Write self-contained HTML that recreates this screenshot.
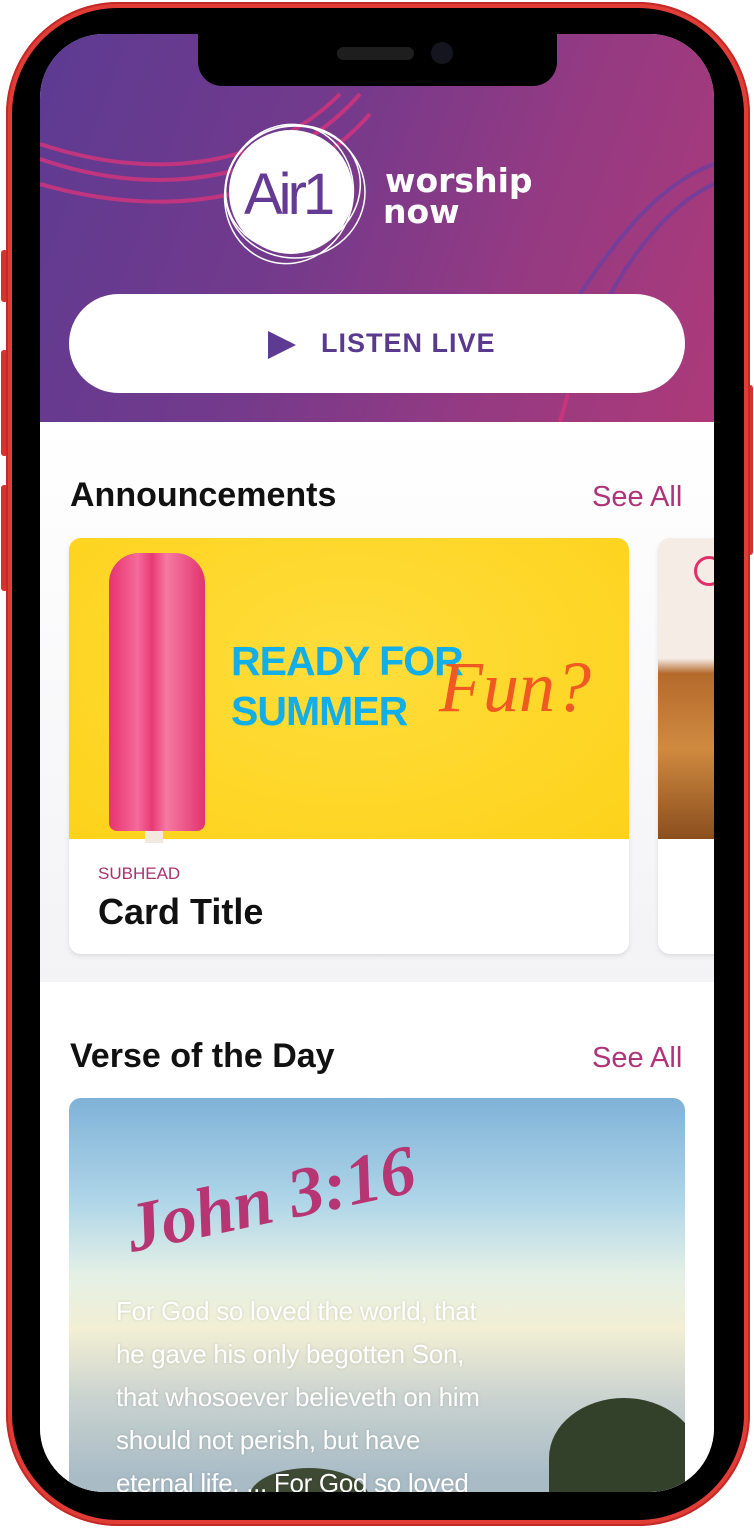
<!DOCTYPE html>
<html><head><meta charset="utf-8"><style>
*{margin:0;padding:0;box-sizing:border-box}
body{width:754px;height:1528px;background:#fff;position:relative;overflow:hidden;font-family:"Liberation Sans",sans-serif}
.abs{position:absolute}
.frame{left:6px;top:2px;width:744px;height:1524px;border-radius:112px;background:#e23c37;box-shadow:inset 0 0 0 2px #c22a26}
.bezel{left:12px;top:8px;width:732px;height:1512px;border-radius:106px;background:#000}
.screen{left:40px;top:34px;width:674px;height:1458px;border-radius:64px;overflow:hidden;background:#fff}
.btn{background:#d8322e}
</style></head><body>
<div class="abs btn" style="left:1px;top:250px;width:7px;height:52px;border-radius:3px"></div>
<div class="abs btn" style="left:1px;top:350px;width:7px;height:106px;border-radius:3px"></div>
<div class="abs btn" style="left:1px;top:485px;width:7px;height:106px;border-radius:3px"></div>
<div class="abs btn" style="left:746px;top:385px;width:7px;height:170px;border-radius:3px"></div>
<div class="abs frame"></div>
<div class="abs bezel"></div>
<div class="abs screen">
  <div class="abs" style="left:0;top:0;width:674px;height:388px;background:linear-gradient(110deg,#5c3b92 0%,#743a8c 40%,#953a82 70%,#ad3a79 100%)"></div>
  <svg class="abs" style="left:0;top:0" width="674" height="388">
    <g fill="none" stroke="#d0357c" stroke-width="4" opacity=".85">
      <path d="M0 110 C120 150 230 130 300 60"/>
      <path d="M0 125 C130 170 250 140 320 60"/>
      <path d="M0 150 C140 190 260 160 330 80"/>
    </g>
    <g fill="none" stroke="#6c3fa0" stroke-width="4" opacity=".8">
      <path d="M674 130 C620 150 580 200 540 260"/>
      <path d="M674 150 C630 170 590 220 560 280"/>
    </g>
    <path d="M520 388 L528 360" stroke="#c8357a" stroke-width="4"/>
    <circle cx="251" cy="158" r="62" fill="#fff"/>
    <g fill="none" stroke="#fff" stroke-width="1.5">
      <ellipse cx="253" cy="154" rx="68" ry="62" transform="rotate(-20 253 154)"/>
      <ellipse cx="249" cy="160" rx="64" ry="70" transform="rotate(15 249 160)"/>
      <ellipse cx="255" cy="158" rx="70" ry="66"/>
    </g>
    <text x="204" y="180" font-family="Liberation Sans" font-size="58" fill="#643a92" letter-spacing="-4">Air1</text>
    <text x="345" y="158" font-family="DejaVu Sans" font-weight="bold" font-size="33" fill="#fff">worship</text>
    <text x="343" y="189" font-family="DejaVu Sans" font-weight="bold" font-size="33" fill="#fff">now</text>
  </svg>
  <div class="abs" style="left:29px;top:260px;width:616px;height:99px;border-radius:50px;background:#fff"></div>
  <svg class="abs" style="left:228px;top:297px" width="30" height="30"><path d="M0 0 L28 14 L0 28Z" fill="#5d3b93"/></svg>
  <div class="abs" style="left:281px;top:294px;font-size:27px;font-weight:bold;color:#5a3a8e;letter-spacing:1px">LISTEN LIVE</div>
  <div class="abs" style="left:158px;top:0;width:359px;height:52px;background:#000;border-radius:0 0 24px 24px"></div>
  <div class="abs" style="left:297px;top:13px;width:77px;height:13px;background:#1e1e1e;border-radius:7px"></div>
  <div class="abs" style="left:391px;top:8px;width:22px;height:22px;background:#151520;border-radius:50%"></div>
  <div class="abs" style="left:0;top:388px;width:674px;height:560px;background:linear-gradient(#fff,#f3f3f6)"></div>
  <div class="abs" style="left:30px;top:442px;font-size:34px;font-weight:bold;color:#111">Announcements</div>
  <div class="abs" style="left:552px;top:447px;font-size:29px;color:#b0337a">See All</div>
  <div class="abs" style="left:29px;top:504px;width:560px;height:416px;border-radius:12px;background:#fff;overflow:hidden;box-shadow:0 2px 5px rgba(0,0,0,.1)">
    <div class="abs" style="left:0;top:0;width:560px;height:301px;background:radial-gradient(ellipse at 50% 40%,#ffdd3c,#fdd21a)"></div>
    <div class="abs" style="left:76px;top:275px;width:18px;height:30px;background:#f2e8e0"></div>
    <div class="abs" style="left:40px;top:15px;width:96px;height:278px;border-radius:30px 30px 8px 8px;background:linear-gradient(90deg,#e8336f,#f46a9a 30%,#e83a75 45%,#f57aa2 60%,#e2336e)"></div>
    <div class="abs" style="left:162px;top:98px;font-size:41px;font-weight:bold;color:#12aee8;line-height:50px;letter-spacing:-1px">READY FOR<br>SUMMER</div>
    <div class="abs" style="left:370px;top:108px;font-family:'Liberation Serif',serif;font-style:italic;font-size:72px;color:#f05a22">Fun?</div>
    <div class="abs" style="left:29px;top:326px;font-size:17px;color:#a8336f">SUBHEAD</div>
    <div class="abs" style="left:29px;top:353px;font-size:36px;font-weight:bold;color:#111">Card Title</div>
  </div>
  <div class="abs" style="left:618px;top:504px;width:80px;height:416px;border-radius:12px;background:#fff;overflow:hidden;box-shadow:0 2px 5px rgba(0,0,0,.1)">
    <div class="abs" style="left:0;top:0;width:80px;height:301px;background:linear-gradient(#f6ece6 40%,#b46a2c 45%,#d08a40 70%,#8a4e1e)"></div>
    <div class="abs" style="left:36px;top:18px;width:30px;height:30px;border:3px solid #e0306a;border-radius:50%"></div>
  </div>
  <div class="abs" style="left:0;top:950px;width:674px;height:508px;background:#fff"></div>
  <div class="abs" style="left:30px;top:1003px;font-size:34px;font-weight:bold;color:#111">Verse of the Day</div>
  <div class="abs" style="left:552px;top:1008px;font-size:29px;color:#b0337a">See All</div>
  <div class="abs" style="left:29px;top:1064px;width:616px;height:420px;border-radius:12px;overflow:hidden;background:linear-gradient(#7fb2d8 0%,#b0d6e8 25%,#e4f0e6 42%,#f2efd4 55%,#c9d2cf 72%,#a9bcc6 90%)">
    <div class="abs" style="left:55px;top:62px;font-family:'Liberation Serif',serif;font-style:italic;font-weight:bold;font-size:70px;color:#b83574;transform:rotate(-12deg);transform-origin:center">John 3:16</div>
    <div class="abs" style="left:480px;top:300px;width:150px;height:120px;border-radius:50% 50% 0 0;background:#33402a"></div>
    <div class="abs" style="left:180px;top:370px;width:120px;height:60px;border-radius:50% 50% 0 0;background:#3e4a33"></div>
    <div class="abs" style="left:47px;top:192px;font-size:26px;line-height:43px;color:#fff;letter-spacing:-.3px;text-shadow:0 0 3px rgba(0,0,0,.15)">For God so loved the world, that<br>he gave his only begotten Son,<br>that whosoever believeth on him<br>should not perish, but have<br>eternal life. ... For God so loved</div>
  </div>
</div>
</body></html>
